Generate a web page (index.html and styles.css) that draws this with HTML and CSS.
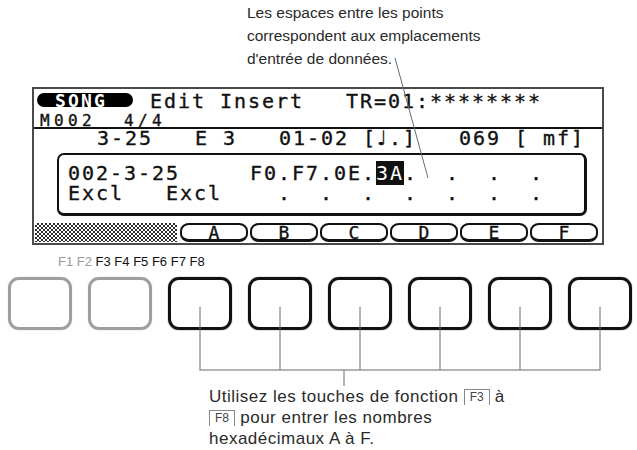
FILE: index.html
```html
<!DOCTYPE html>
<html lang="fr">
<head>
<meta charset="utf-8">
<link rel="stylesheet" href="styles.css">
</head>
<body>
<div class="page">
  <p class="note-top">Les espaces entre les points<br>correspondent aux emplacements<br>d'entrée de données.</p>
  <div class="lcd">
    <div class="lcd-row r1"><span class="pill">SONG</span><span class="t1">Edit Insert   TR=01:********</span></div>
    <div class="lcd-row r2"><span class="small">M002  4/4</span></div>
    <div class="lcd-row r3">3-25   E 3   01-02 [<span class="qn">♩</span>.]   069 [ mf]</div>
    <div class="inner">
      <div class="lcd-row ir">002-3-25     F0.F7.0E.<span class="hl">3A</span>.  .  .  .</div>
      <div class="lcd-row ir">Excl   Excl    .  .  .  .  .  .  .</div>
    </div>
    <div class="tabs">
      <div class="dither"></div>
      <div class="tab">A</div>
      <div class="tab">B</div>
      <div class="tab">C</div>
      <div class="tab">D</div>
      <div class="tab">E</div>
      <div class="tab">F</div>
    </div>
  </div>
  <div class="flabels"><span class="dim">F1 F2</span> F3 F4 F5 F6 F7 F8</div>
  <div class="keys">
    <div class="key off"></div>
    <div class="key off"></div>
    <div class="key"></div>
    <div class="key"></div>
    <div class="key"></div>
    <div class="key"></div>
    <div class="key"></div>
    <div class="key"></div>
  </div>
  <p class="note-bottom">Utilisez les touches de fonction <span class="kc">F3</span> à<br><span class="kc">F8</span> pour entrer les nombres<br>hexadécimaux A à F.</p>
  <svg class="leaders" width="637" height="450" viewBox="0 0 637 450">
    <line x1="395" y1="58" x2="428" y2="178"/>
    <line x1="200" y1="307" x2="200" y2="370"/>
    <line x1="280" y1="307" x2="280" y2="370"/>
    <line x1="360" y1="307" x2="360" y2="370"/>
    <line x1="440" y1="307" x2="440" y2="370"/>
    <line x1="520" y1="307" x2="520" y2="370"/>
    <line x1="600" y1="307" x2="600" y2="370"/>
    <line x1="199.5" y1="370" x2="600.5" y2="370"/>
    <line x1="344" y1="370" x2="344" y2="386"/>
  </svg>
</div>
</body>
</html>
```
FILE: styles.css
```css
html, body {
  margin: 0;
  padding: 0;
  background: #fff;
}
.page {
  position: relative;
  width: 637px;
  height: 450px;
  overflow: hidden;
  font-family: "Liberation Sans", Arial, sans-serif;
  color: #2a2a2a;
}
.note-top {
  margin: 0;
  padding: 1px 0 0 247px;
  font-size: 15.5px;
  line-height: 23px;
}
.lcd {
  margin: 17px 0 0 32px;
  width: 572px;
  box-sizing: border-box;
  border: 2px solid #4a4a4a;
  display: flex;
  flex-direction: column;
  padding: 2px 0 1px;
  font-family: "DejaVu Sans Mono", monospace;
  font-size: 20px;
  letter-spacing: 1.96px;
  color: #111;
  -webkit-text-stroke: 0.35px #111;
}
.lcd-row {
  white-space: pre;
  height: 19px;
  line-height: 19px;
}
.r1 {
  height: 17px;
  line-height: 17px;
  display: flex;
  align-items: center;
}
.pill {
  display: inline-block;
  box-sizing: border-box;
  width: 96px;
  height: 14px;
  line-height: 15px;
  margin-left: 3px;
  padding-left: 18px;
  background: #000;
  color: #fff;
  border-radius: 8px;
  font-weight: bold;
  font-size: 18px;
  letter-spacing: 2.16px;
  -webkit-text-stroke: 0;
}
.t1 {
  margin-left: 17px;
  position: relative;
  top: 2px;
}
.r2 {
  border-bottom: 2px solid #111;
  padding-left: 6px;
}
.small {
  font-size: 16px;
  letter-spacing: 4.37px;
  position: relative;
  top: 2px;
}
.r3 {
  padding-left: 63px;
}
.qn {
  display: inline-block;
  width: 12.04px;
  font-family: "DejaVu Sans", sans-serif;
  letter-spacing: 0;
}
.inner {
  margin: 5px 0 0 23px;
  width: 530px;
  height: 63px;
  box-sizing: border-box;
  border: 2px solid #111;
  border-right-width: 3px;
  border-bottom-width: 3px;
  border-radius: 7px;
  padding: 8px 0 0 9px;
}
.ir {
  height: 20px;
  line-height: 20px;
}
.hl {
  background: #111;
  color: #fff;
  -webkit-text-stroke: 0;
}
.tabs {
  margin: 7px 0 0 1px;
  display: flex;
  gap: 2px;
  height: 19px;
}
.dither {
  width: 142px;
  margin-right: 1px;
  background: repeating-conic-gradient(#2a2a2a 0 25%, #fff 0 50%) 0 0 / 4px 4px;
}
.tab {
  width: 68px;
  box-sizing: border-box;
  border: 2px solid #111;
  border-bottom-width: 3px;
  border-radius: 9px / 8px;
  text-align: center;
  font-size: 18px;
  line-height: 15px;
  letter-spacing: 0;
}
.flabels {
  margin: 10px 0 0 58px;
  font-size: 13px;
  line-height: 13px;
  letter-spacing: 0;
  color: #111;
}
.dim {
  color: #9a9a9a;
}
.keys {
  margin: 9px 0 0 8px;
  display: flex;
  gap: 16px;
}
.key {
  width: 64px;
  height: 53px;
  box-sizing: border-box;
  border: 3px solid #111;
  border-radius: 11px;
  box-shadow: 0 0 1px #000;
}
.key.off {
  border-color: #9e9e9e;
  box-shadow: 0 0 1px #999;
}
.note-bottom {
  margin: 56px 0 0 209px;
  font-size: 17px;
  line-height: 21px;
  letter-spacing: 0.5px;
}
.kc {
  display: inline-block;
  font-size: 12px;
  line-height: 15px;
  padding: 0 5px;
  border-top: 1px solid #888;
  border-left: 1px solid #888;
  border-right: 1px solid #888;
  color: #444;
  letter-spacing: 0;
  vertical-align: 1px;
}
.leaders {
  position: absolute;
  left: 0;
  top: 0;
  pointer-events: none;
}
.leaders line {
  stroke: #6a6a6a;
  stroke-width: 1;
}
```
